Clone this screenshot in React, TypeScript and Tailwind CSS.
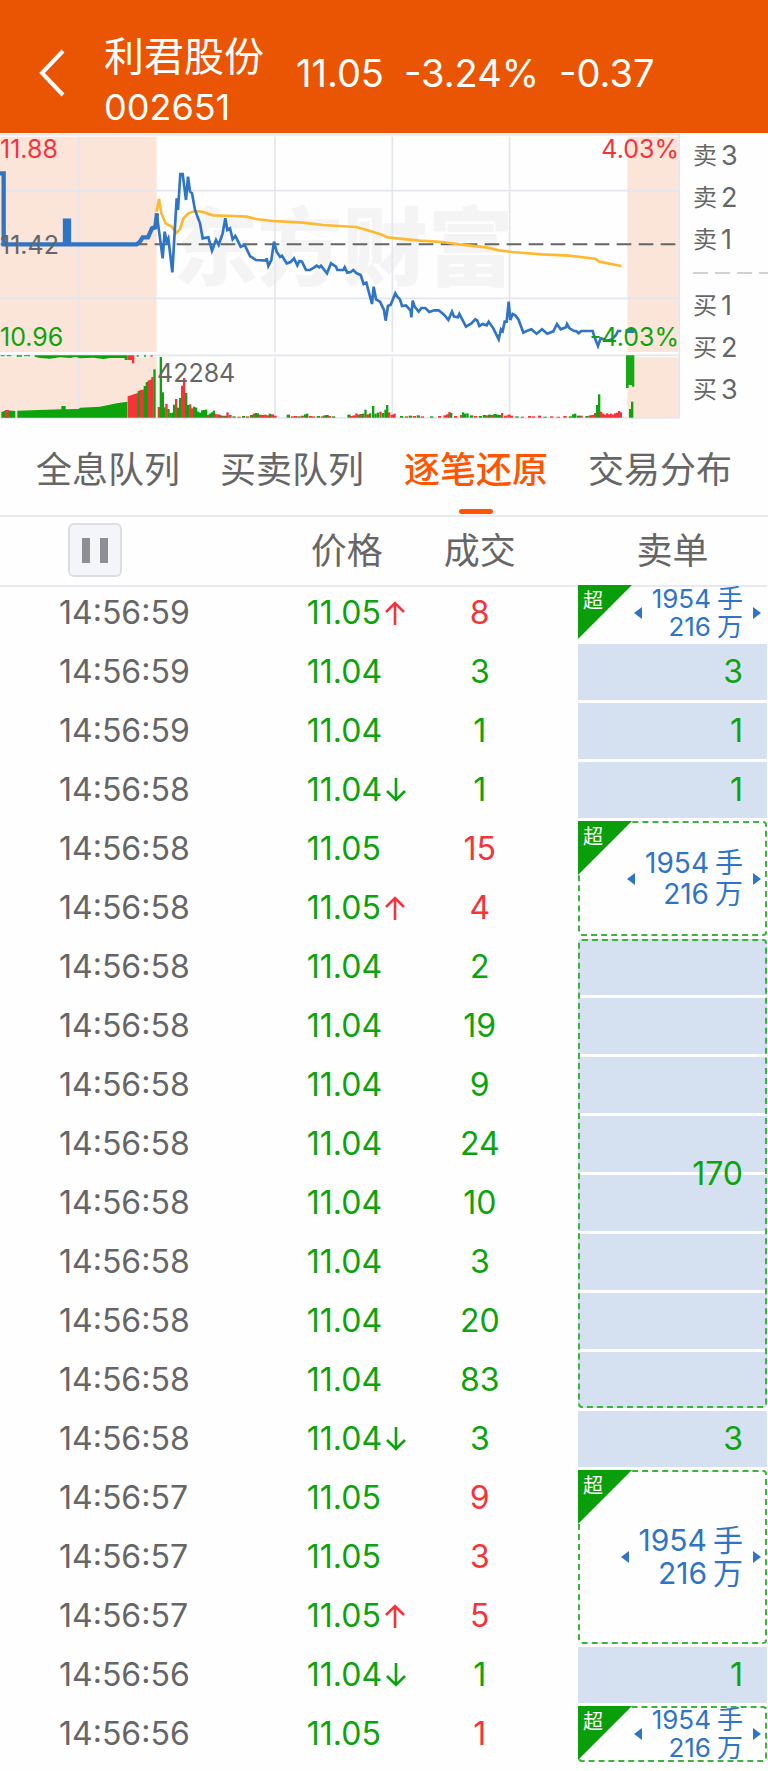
import clsx from 'clsx'

type Side = 'up' | 'down'

type Order =
    | { kind: 'big'; span: number; framed: boolean }
    | { kind: 'small'; span: number; amount: number }

type Trade = {
    time: string
    price: string
    volume: number
    side: Side
    arrow?: Side
    order?: Order
}

const trades: Trade[] = [
    { time: '14:56:59', price: '11.05', volume: 8, side: 'up', arrow: 'up', order: { kind: 'big', span: 1, framed: false } },
    { time: '14:56:59', price: '11.04', volume: 3, side: 'down', order: { kind: 'small', span: 1, amount: 3 } },
    { time: '14:56:59', price: '11.04', volume: 1, side: 'down', order: { kind: 'small', span: 1, amount: 1 } },
    { time: '14:56:58', price: '11.04', volume: 1, side: 'down', arrow: 'down', order: { kind: 'small', span: 1, amount: 1 } },
    { time: '14:56:58', price: '11.05', volume: 15, side: 'up', order: { kind: 'big', span: 2, framed: true } },
    { time: '14:56:58', price: '11.05', volume: 4, side: 'up', arrow: 'up' },
    { time: '14:56:58', price: '11.04', volume: 2, side: 'down', order: { kind: 'small', span: 8, amount: 170 } },
    { time: '14:56:58', price: '11.04', volume: 19, side: 'down' },
    { time: '14:56:58', price: '11.04', volume: 9, side: 'down' },
    { time: '14:56:58', price: '11.04', volume: 24, side: 'down' },
    { time: '14:56:58', price: '11.04', volume: 10, side: 'down' },
    { time: '14:56:58', price: '11.04', volume: 3, side: 'down' },
    { time: '14:56:58', price: '11.04', volume: 20, side: 'down' },
    { time: '14:56:58', price: '11.04', volume: 83, side: 'down' },
    { time: '14:56:58', price: '11.04', volume: 3, side: 'down', arrow: 'down', order: { kind: 'small', span: 1, amount: 3 } },
    { time: '14:56:57', price: '11.05', volume: 9, side: 'up', order: { kind: 'big', span: 3, framed: true } },
    { time: '14:56:57', price: '11.05', volume: 3, side: 'up' },
    { time: '14:56:57', price: '11.05', volume: 5, side: 'up', arrow: 'up' },
    { time: '14:56:56', price: '11.04', volume: 1, side: 'down', arrow: 'down', order: { kind: 'small', span: 1, amount: 1 } },
    { time: '14:56:56', price: '11.05', volume: 1, side: 'up', order: { kind: 'big', span: 1, framed: true } },
]

const tabs = ['全息队列', '买卖队列', '逐笔还原', '交易分布']
const activeTab = '逐笔还原'

const RED = '#f5333a'
const GREEN = '#0ca30c'

// [x, height, colour], measured from the bottom of the volume pane
const volumeBars: [number, number, string][] = [
    [383, 65, RED], [389, 67, RED], [395, 69, RED], [401, 71, RED], [407, 73, RED], [413, 80, GREEN],
    [419, 83, RED], [425, 84, RED], [431, 95, GREEN], [437, 107, GREEN], [443, 112, RED], [449, 114, RED],
    [454, 122, RED], [460, 145, GREEN],
    [473, 32, RED], [479, 182, GREEN], [485, 76, GREEN], [490, 31, GREEN], [496, 41, RED], [502, 26, GREEN],
    [508, 14, GREEN], [514, 15, GREEN], [519, 39, GREEN], [525, 56, RED], [531, 30, GREEN], [537, 59, GREEN],
    [543, 96, RED], [549, 119, RED], [555, 74, GREEN], [561, 38, GREEN], [567, 40, RED], [573, 28, RED],
    [579, 33, GREEN], [585, 30, GREEN], [591, 18, GREEN], [597, 15, GREEN], [603, 22, GREEN], [609, 23, GREEN],
    [615, 24, GREEN], [620, 8, RED], [626, 12, GREEN], [632, 16, GREEN], [638, 21, GREEN], [643, 12, RED],
    [649, 10, RED], [655, 8, RED], [661, 5, GREEN], [667, 6, RED], [673, 5, GREEN], [679, 16, RED],
    [685, 8, RED], [697, 4, GREEN], [712, 3, RED], [726, 5, GREEN], [738, 4, RED], [750, 8, GREEN],
    [758, 12, RED], [764, 14, GREEN], [770, 13, GREEN], [776, 9, RED], [782, 8, RED], [790, 9, RED],
    [798, 7, RED], [806, 12, GREEN], [812, 10, RED], [820, 6, RED], [860, 9, GREEN], [872, 4, RED],
    [882, 5, RED], [892, 4, GREEN], [902, 6, RED], [912, 10, GREEN], [918, 12, GREEN], [926, 5, RED],
    [936, 4, RED], [950, 5, GREEN], [962, 4, RED], [970, 7, GREEN], [976, 8, GREEN], [984, 5, RED],
    [996, 4, GREEN], [1042, 9, GREEN], [1050, 5, RED], [1058, 7, RED], [1066, 13, RED], [1072, 9, GREEN],
    [1078, 11, RED], [1086, 12, GREEN], [1093, 24, GREEN], [1099, 10, RED], [1107, 13, GREEN],
    [1116, 35, GREEN], [1123, 12, GREEN], [1130, 15, GREEN], [1138, 18, RED], [1146, 14, GREEN],
    [1153, 24, GREEN], [1158, 38, GREEN], [1164, 16, RED], [1172, 9, RED], [1180, 12, RED], [1200, 5, GREEN],
    [1214, 4, RED], [1226, 6, GREEN], [1238, 5, RED], [1250, 7, GREEN], [1262, 4, RED], [1290, 4, GREEN],
    [1314, 5, RED], [1330, 7, RED], [1338, 10, RED], [1345, 17, RED], [1350, 14, GREEN], [1362, 5, RED],
    [1380, 8, RED], [1386, 16, GREEN], [1392, 12, GREEN], [1399, 13, GREEN], [1410, 7, GREEN],
    [1422, 5, RED], [1436, 5, GREEN], [1448, 8, GREEN], [1456, 7, RED], [1464, 9, GREEN], [1472, 8, RED],
    [1480, 11, GREEN], [1488, 9, GREEN], [1496, 8, GREEN], [1503, 14, RED], [1512, 6, RED], [1522, 9, RED],
    [1530, 6, RED], [1546, 4, GREEN], [1562, 3, RED], [1584, 5, RED], [1596, 4, RED], [1614, 6, RED],
    [1630, 3, GREEN], [1650, 4, RED], [1670, 3, RED], [1690, 5, RED], [1706, 4, GREEN], [1716, 10, GREEN],
    [1722, 12, GREEN], [1730, 6, GREEN], [1738, 6, RED], [1756, 5, GREEN], [1766, 7, RED], [1774, 8, RED],
    [1782, 14, RED], [1788, 38, GREEN], [1794, 70, GREEN], [1800, 18, RED], [1806, 12, RED], [1812, 9, RED],
    [1818, 13, RED], [1824, 10, RED], [1830, 12, RED], [1836, 9, RED], [1842, 13, RED], [1848, 15, RED],
    [1854, 20, RED], [1859, 16, RED], [1887, 26, GREEN], [1893, 48, GREEN],
]

const priceLine =
    'M470 250 478 310 488 385 494 305 500 335 505 325 517 427 530 205 534 240 541 132 548 132 558 210 564 140 570 185 576 190 585 240 600 280 608 325 625 322 636 362 648 330 656 345 668 310 676 265 682 300 690 295 698 328 706 318 722 350 734 345 750 378 768 390 ' +
    '798 392 800 385 805 408 814 390 822 335 830 365 840 380 846 377 860 400 872 396 882 385 892 406 898 393 906 395 918 420 930 420 943 412 950 407 958 412 963 407 981 430 993 400 1008 410 1012 420 1030 420 1034 412 1042 428 1052 426 1060 420 1070 430 1082 435 1091 462 1099 458 1116 522 1121 470 1128 508 1140 515 1152 540 1157 572 1164 528 1172 524 1186 490 1192 500 1200 508 1206 528 1218 526 1232 542 1234 562 1238 512 1244 530 1256 545 1264 534 1276 534 1288 546 1303 541 1316 541 1333 555 1345 570 1356 545 1362 560 1374 562 1378 552 1398 590 1414 580 1426 568 1432 572 1438 588 1448 582 1460 586 1466 575 1480 595 1496 628 1503 598 1508 603 1514 575 1520 575 1526 515 1531 570 ' +
    '1538 552 1546 556 1556 570 1570 608 1580 603 1594 598 1610 611 1626 598 1642 611 1660 604 1671 582 1682 598 1698 592 1701 582 1708 594 1722 603 1728 603 1736 610 1744 603 1778 603 1786 628 1794 648 1802 625 1812 628 1821 632 1836 628 1848 615 1854 603 1864 603'

const averageLine =
    'M470 245 477 207 484 250 497 280 515 290 530 308 540 298 550 265 565 250 585 243 605 245 640 256 700 258 740 260 768 267 818 273 908 278 968 285 1068 291 1108 302 1148 315 1163 322 1258 332 1328 336 1378 343 1458 352 1498 361 1536 366 1626 373 1706 377 1786 386 1798 395 1864 408'

function Header() {
    return (
        <header className="flex items-start bg-[#ea5504] pt-8 pb-px text-white">
            <button type="button" aria-label="返回" className="mt-4 ml-9 flex h-[50px] w-8 items-center">
                <svg viewBox="0 0 32 50" className="h-[50px] w-8" fill="none" stroke="currentColor" strokeWidth="4">
                    <path d="M27 3 6 25l21 22" />
                </svg>
            </button>
            <div className="ml-9">
                <h1 className="text-[40px] leading-[50px]">利君股份</h1>
                <div className="text-[36px] leading-[50px]">002651</div>
            </div>
            <div className="mt-4 ml-8 flex gap-5 text-[38px] leading-[50px]">
                <span>11.05</span>
                <span>-3.24%</span>
                <span>-0.37</span>
            </div>
        </header>
    )
}

function Chart() {
    return (
        <div className="relative flex-1 text-[25px] leading-6">
            <svg viewBox="0 9 2040 858" className="block w-full" fill="none">
                {/* auction periods */}
                <path d="M0 20H470V666H0zM0 682H470V863H0zM1882 20H2036V666H1882zM1882 682H2036V863H1882z" fill="#fbe5d9" />
                <g fill="#f4f4f5" fontSize="256" fontWeight="900">
                    <text x="518" y="446">东</text>
                    <text x="772" y="446">方</text>
                    <text x="1028" y="446">财</text>
                    <text x="1284" y="446">富</text>
                </g>
                <path
                    d="M0 182H2036M0 505H2036M0 676H2036M236 20V666M236 682V863M825 20V666M825 682V863M1177 20V666M1177 682V863M1529 20V666M1529 682V863M0 14H2038V864H0"
                    stroke="#e4e6ee"
                    strokeWidth="5"
                />
                <path d="M2 343H2030" stroke="#666" strokeWidth="6" strokeDasharray="44 22" />
                {/* volume */}
                <path d="M4 863V846L20 841 46 843V863zM52 863V842L184 838V828H197V838L236 837 240 833 300 830 350 820 382 815V863z" fill={GREEN} />
                <path d="M15 863V840H26V863z" fill={RED} />
                <path d="M2 676H14V679H2zM20 676H34V679H20zM50 676H66V680H50zM72 676H90V679H72zM104 676H382V690H374V684H330L310 687 280 683 240 685 226 680 212 684 180 682 150 686 120 684 104 680zM410 676H416V680H410zM432 676H438V680H432z" fill={GREEN} />
                <path d="M382 676H403V700H396V690H382zM452 676H458V680H452z" fill={RED} />
                {volumeBars.map(([x, h, fill]) => (
                    <rect key={x} x={x} y={863 - h} width={h < 12 ? 10 : 7} height={h} fill={fill} />
                ))}
                <path d="M1878 676H1903V770H1896V765H1886V774H1878z" fill="#16a816" />
                <path d={averageLine} stroke="#fdb92f" strokeWidth="8" />
                <g stroke="#2f74c5">
                    <path d="M0 130H11V343H195V272H207V343H410L420 335 428 322H444L456 295 466 292 471 250" strokeWidth="13" />
                    <path d={priceLine} strokeWidth="8" />
                    <path d="M1877 603H1904" strokeWidth="12" />
                </g>
            </svg>
            <span className="absolute top-1 left-0 text-[#f5333a]">11.88</span>
            <span className="absolute top-25 left-0 text-[#666]">11.42</span>
            <span className="absolute top-48 left-0 text-[#0ca30c]">10.96</span>
            <span className="absolute top-1 right-px text-[#f5333a]">4.03%</span>
            <span className="absolute top-48 right-px text-[#0ca30c]">-4.03%</span>
            <span className="absolute top-[228px] left-[157px] text-[#666]">42284</span>
        </div>
    )
}

function Level({ side, level }: { side: string; level: number }) {
    return (
        <li className="flex h-[42px] items-center gap-1 text-2xl">
            {side}
            <span className="text-[27px]">{level}</span>
        </li>
    )
}

function OrderBook() {
    return (
        <div className="w-[88px] pt-0.5 pl-[13px] text-[#666]">
            <ul>
                {[3, 2, 1].map((n) => (
                    <Level key={n} side="卖" level={n} />
                ))}
            </ul>
            <div className="flex h-6 items-center">
                <div className="h-0.5 w-full bg-[repeating-linear-gradient(to_right,#cfd1d8_0_15px,transparent_15px_22px)]" />
            </div>
            <ul>
                {[1, 2, 3].map((n) => (
                    <Level key={n} side="买" level={n} />
                ))}
            </ul>
        </div>
    )
}

function Tabs() {
    return (
        <nav className="flex justify-between border-b-2 border-[#e9eaf0] px-9">
            {tabs.map((tab) => (
                <button
                    key={tab}
                    type="button"
                    className={clsx(
                        'relative h-24 pt-1.5 text-[36px]',
                        tab === activeTab ? 'font-medium text-[#ff5500]' : 'text-[#666]',
                    )}
                >
                    {tab}
                    {tab === activeTab && (
                        <span className="absolute bottom-px left-1/2 h-[5px] w-[34px] -translate-x-1/2 rounded-sm bg-[#ff5500]" />
                    )}
                </button>
            ))}
        </nav>
    )
}

function Arrow({ side }: { side: Side }) {
    return (
        <svg
            viewBox="0 0 20 26"
            className={clsx('ml-1 h-[26px] w-5', side === 'up' ? 'text-[#f5333a]' : 'text-[#0ca30c]')}
            fill="none"
            stroke="currentColor"
            strokeWidth="2.6"
        >
            <path d={side === 'up' ? 'M10 25V3M1 12l9-9 9 9' : 'M10 1v22M1 14l9 9 9-9'} />
        </svg>
    )
}

function BigOrder({ order }: { order: Order & { kind: 'big' } }) {
    return (
        <td
            rowSpan={order.span}
            className={clsx(
                'relative p-0 text-[#2f74c5]',
                order.framed && 'rounded-sm outline-2 -outline-offset-2 outline-[#3cb43c] outline-dashed',
            )}
        >
            <span className="absolute top-0 left-0 size-[54px] bg-[#0a9f0a] pt-1 pl-[5px] text-xl leading-6 text-white [clip-path:polygon(0_0,100%_0,0_100%)]">
                超
            </span>
            <div className="flex items-center justify-end gap-2.5 pr-1.5">
                <svg viewBox="0 0 8 12" className="h-3 w-2" fill="currentColor">
                    <path d="M8 0v12L0 6z" />
                </svg>
                <div
                    className={clsx(
                        'text-right',
                        order.span === 1 && 'text-[26px] leading-[28px]',
                        order.span === 2 && 'text-[28px] leading-[31px]',
                        order.span === 3 && 'text-[30px] leading-[33px]',
                    )}
                >
                    <div>1954<span className="ml-1.5">手</span></div>
                    <div>216<span className="ml-1.5">万</span></div>
                </div>
                <svg viewBox="0 0 8 12" className="h-3 w-2" fill="currentColor">
                    <path d="M0 0v12l8-6z" />
                </svg>
            </div>
        </td>
    )
}

function SmallOrder({ order }: { order: Order & { kind: 'small' } }) {
    return (
        <td
            rowSpan={order.span}
            className={clsx(
                'py-0 pr-6 text-right text-[#0ca30c]',
                order.span === 1
                    ? 'bg-[#d5e1f1]'
                    : 'rounded-sm bg-[repeating-linear-gradient(to_bottom,#d5e1f1_0_56px,#fff_56px_59px)] outline-2 -outline-offset-2 outline-[#3cb43c] outline-dashed',
            )}
        >
            {order.amount}
        </td>
    )
}

function TradeTable() {
    return (
        <div className="pr-px pb-1">
            <table className="w-full table-fixed border-separate border-spacing-x-0 border-spacing-y-[3px] text-[32px] leading-9 text-[#666]">
                <colgroup>
                    <col className="w-[40%]" />
                    <col className="w-[16%]" />
                    <col />
                    <col className="w-[189px]" />
                </colgroup>
                <thead>
                    <tr className="h-[62px] text-[36px] [&>th]:py-0 [&>th]:font-normal [&>th]:shadow-[0_3px_0_#fefefe,0_5px_0_#e9eaf0]">
                        <th className="pl-[68px] text-left">
                            <button
                                type="button"
                                aria-label="暂停"
                                className="mb-0.5 flex size-[54px] items-center justify-center gap-2.5 rounded-md border-2 border-[#dcdde4] bg-[#f4f5f9]"
                            >
                                <span className="h-[25px] w-2 bg-[#8e8e96]" />
                                <span className="h-[25px] w-2 bg-[#8e8e96]" />
                            </button>
                        </th>
                        <th className="pl-1 text-left">价格</th>
                        <th className="pr-12">成交</th>
                        <th>卖单</th>
                    </tr>
                </thead>
                <tbody>
                    {trades.map((trade, i) => (
                        <tr key={i} className="h-14">
                            <td className="py-0 pl-[59px]">{trade.time}</td>
                            <td className="p-0 text-[#0ca30c]">
                                <div className="flex items-center">
                                    {trade.price}
                                    {trade.arrow && <Arrow side={trade.arrow} />}
                                </div>
                            </td>
                            <td
                                className={clsx(
                                    'py-0 pr-12 text-center',
                                    trade.side === 'up' ? 'text-[#f5333a]' : 'text-[#0ca30c]',
                                )}
                            >
                                {trade.volume}
                            </td>
                            {trade.order?.kind === 'big' && <BigOrder order={trade.order} />}
                            {trade.order?.kind === 'small' && <SmallOrder order={trade.order} />}
                        </tr>
                    ))}
                </tbody>
            </table>
        </div>
    )
}

export default function App() {
    return (
        <div className="min-h-screen bg-[#fefefe] font-['Inter','Noto_Sans_CJK_SC',sans-serif]">
            <Header />
            <main>
                <section className="flex">
                    <Chart />
                    <OrderBook />
                </section>
                <Tabs />
                <TradeTable />
            </main>
        </div>
    )
}
